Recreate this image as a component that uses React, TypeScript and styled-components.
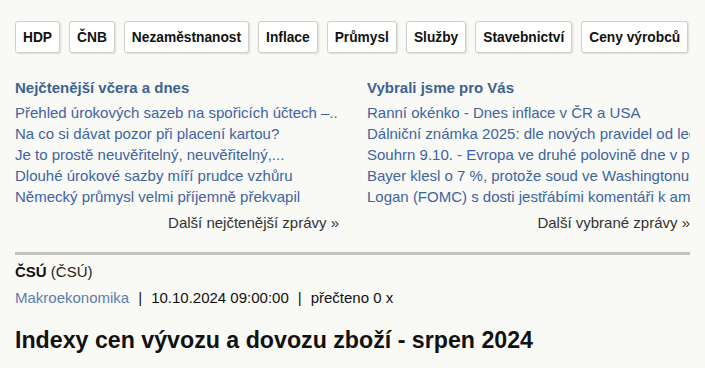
import React from "react";
import styled, { createGlobalStyle } from "styled-components";

const Global = createGlobalStyle`
  html, body { margin: 0; padding: 0; background: #f9f9f5; }
  body { font-family: "Liberation Sans", Arial, sans-serif; color: #111; }
`;

const Page = styled.div`
  padding: 21px 15px 0 15px;
  width: 675px;
  overflow: hidden;
`;

const Toolbar = styled.div`
  display: flex;
  gap: 9px;
  flex-wrap: nowrap;
`;

const TagButton = styled.a`
  display: inline-flex;
  align-items: center;
  justify-content: center;
  height: 32px;
  box-sizing: border-box;
  padding: 0 7px;
  background: #fff;
  border: 1px solid #cfcfcf;
  border-radius: 3px;
  box-shadow: 1px 1px 2px rgba(0, 0, 0, 0.12);
  font-weight: bold;
  font-size: 13.75px;
  color: #111;
  text-decoration: none;
  white-space: nowrap;
`;

const Columns = styled.div`
  display: grid;
  grid-template-columns: 324px 323px;
  column-gap: 28px;
  margin-top: 26px;
`;

const Column = styled.div`
  min-width: 0;
  overflow: hidden;
`;

const ColTitle = styled.div`
  font-weight: bold;
  font-size: 15px;
  color: #3c6391;
  line-height: 18px;
  margin-bottom: 5px;
`;

const NewsLink = styled.a`
  display: block;
  font-size: 15px;
  line-height: 21px;
  color: #3d64a3;
  text-decoration: none;
  white-space: nowrap;
`;

const More = styled.a`
  display: block;
  text-align: right;
  font-size: 15px;
  line-height: 21px;
  color: #333;
  margin-top: 5px;
  text-decoration: none;
  white-space: nowrap;
`;

const Rule = styled.hr`
  border: 0;
  height: 3px;
  background: #c2c2c0;
  margin: 19px 0 0 0;
`;

const Source = styled.div`
  margin-top: 8px;
  font-size: 15px;
  line-height: 18px;
  color: #222;
`;

const SourceName = styled.b`
  color: #111;
`;

const Meta = styled.div`
  margin-top: 8px;
  font-size: 15px;
  line-height: 18px;
  color: #111;
  display: flex;
  gap: 9px;
  white-space: nowrap;
`;

const CategoryLink = styled.a`
  color: #5b7db3;
  text-decoration: none;
`;

const Title = styled.h1`
  margin: 19px 0 0 0;
  font-size: 23.2px;
  line-height: 28px;
  font-weight: bold;
  color: #111;
  white-space: nowrap;
`;

const tags = [
  "HDP",
  "ČNB",
  "Nezaměstnanost",
  "Inflace",
  "Průmysl",
  "Služby",
  "Stavebnictví",
  "Ceny výrobců",
];

const mostRead = [
  "Přehled úrokových sazeb na spořicích účtech –..",
  "Na co si dávat pozor při placení kartou?",
  "Je to prostě neuvěřitelný, neuvěřitelný,...",
  "Dlouhé úrokové sazby míří prudce vzhůru",
  "Německý průmysl velmi příjemně překvapil",
];

const picked = [
  "Ranní okénko - Dnes inflace v ČR a USA",
  "Dálniční známka 2025: dle nových pravidel od ledna",
  "Souhrn 9.10. - Evropa ve druhé polovině dne v plusu",
  "Bayer klesl o 7 %, protože soud ve Washingtonu zamítl",
  "Logan (FOMC) s dosti jestřábími komentáři k americké",
];

export default function App() {
  return (
    <>
      <Global />
      <Page>
        <Toolbar>
          {tags.map((t) => (
            <TagButton key={t} href="#">
              {t}
            </TagButton>
          ))}
        </Toolbar>
        <Columns>
          <Column>
            <ColTitle>Nejčtenější včera a dnes</ColTitle>
            {mostRead.map((t) => (
              <NewsLink key={t} href="#">
                {t}
              </NewsLink>
            ))}
            <More href="#">Další nejčtenější zprávy »</More>
          </Column>
          <Column>
            <ColTitle>Vybrali jsme pro Vás</ColTitle>
            {picked.map((t) => (
              <NewsLink key={t} href="#">
                {t}
              </NewsLink>
            ))}
            <More href="#">Další vybrané zprávy »</More>
          </Column>
        </Columns>
        <Rule />
        <Source>
          <SourceName>ČSÚ</SourceName> (ČSÚ)
        </Source>
        <Meta>
          <CategoryLink href="#">Makroekonomika</CategoryLink>
          <span>|</span>
          <span>10.10.2024 09:00:00</span>
          <span>|</span>
          <span>přečteno 0 x</span>
        </Meta>
        <Title>Indexy cen vývozu a dovozu zboží - srpen 2024</Title>
      </Page>
    </>
  );
}
